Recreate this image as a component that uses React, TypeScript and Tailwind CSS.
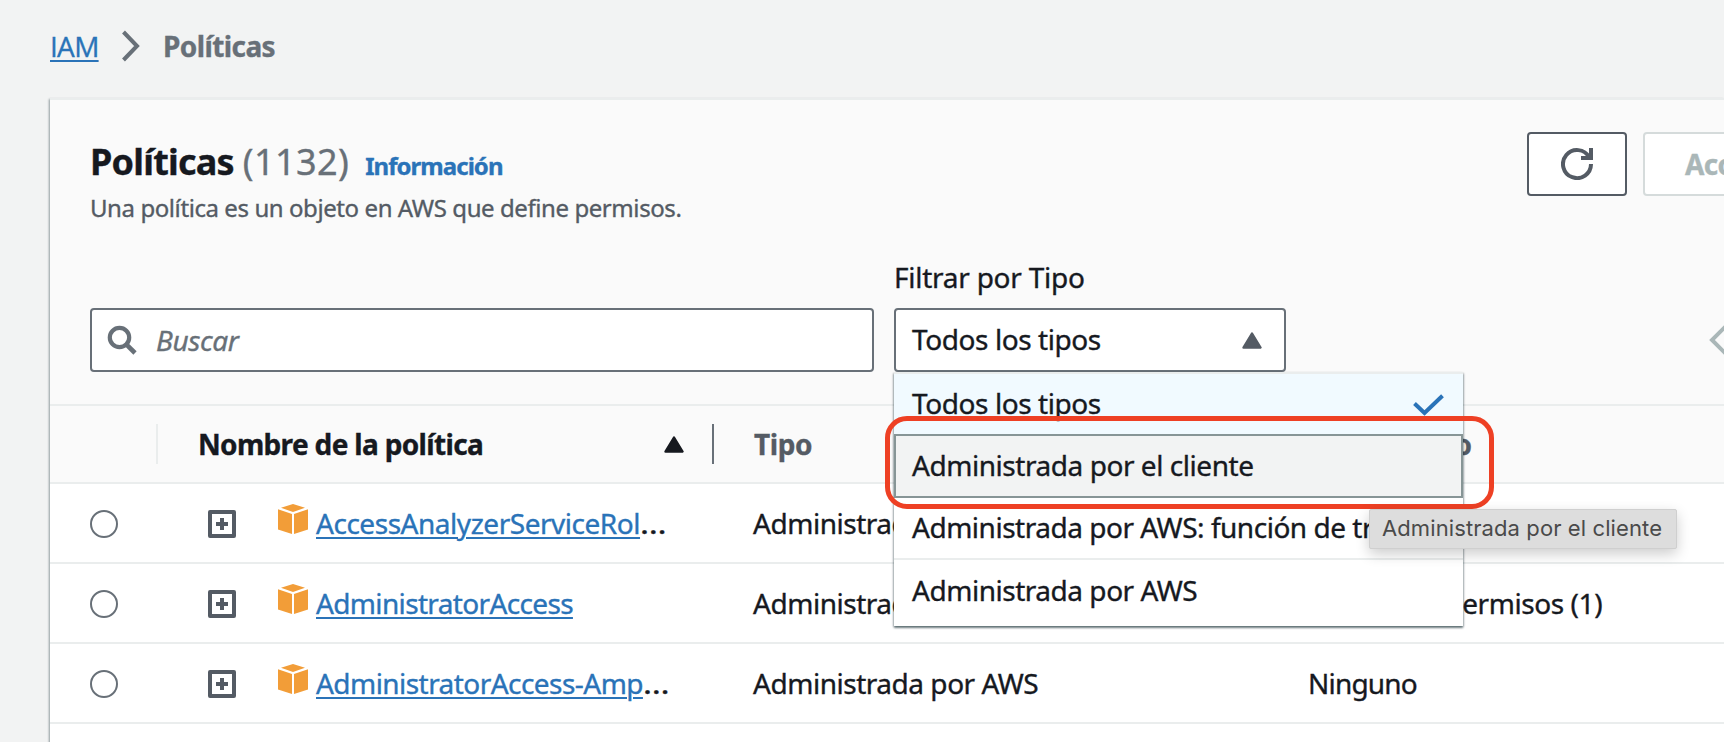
import React from 'react';

function SortUp({ className }: { className: string }) {
  return (
    <svg width="20" height="17" viewBox="0 0 20 17" className={className}>
      <path d="M10 1.5 18.5 15.5H1.5Z" fill="currentColor" stroke="currentColor" strokeWidth="2.4" strokeLinejoin="round" />
    </svg>
  );
}

function Cube() {
  return (
    <svg width="30" height="30" viewBox="0 0 30 30" className="mb-2 shrink-0 fill-[#f29d38]">
      <path d="M15 0 27 3.8 15 8 3 3.8Z" />
      <path d="M0 5.2 14 10V30L0 25.6Z" />
      <path d="M30 5.2 16 10V30L30 25.6Z" />
    </svg>
  );
}

function ExpandIcon() {
  return (
    <svg width="28" height="28" viewBox="0 0 28 28" fill="none" stroke="#545b64" strokeWidth="4" className="mt-0.5 ml-[90px] shrink-0">
      <rect x="2" y="2" width="24" height="24" strokeLinejoin="round" />
      <path d="M14 8v12M8 14h12" />
    </svg>
  );
}

type Row = { name: string; nameTrack: string; cut: boolean; use: string; useTrack: string };

const rows: Row[] = [
  { name: 'AccessAnalyzerServiceRol', nameTrack: 'tracking-[-0.47px]', cut: true, use: 'Ninguno', useTrack: 'tracking-[-0.8px]' },
  { name: 'AdministratorAccess', nameTrack: 'tracking-[-0.65px]', cut: false, use: 'Política de permisos (1)', useTrack: 'tracking-[-0.42px]' },
  { name: 'AdministratorAccess-Amp', nameTrack: 'tracking-[-0.55px]', cut: true, use: 'Ninguno', useTrack: 'tracking-[-0.8px]' },
];

function PolicyRow({ row }: { row: Row }) {
  return (
    <div className="flex h-20 items-center border-b-2 border-[#eaeded] bg-white pl-10">
      <span className="mt-0.5 size-7 shrink-0 rounded-full border-2 border-[#687078] bg-white" />
      <ExpandIcon />
      <div className="ml-[42px] flex w-[475px] shrink-0 items-center">
        <Cube />
        <span className={'ml-2 ' + row.nameTrack}>
          <a className="text-[#2a73b8] underline decoration-2 underline-offset-[3px]">{row.name}</a>
          {row.cut && <span className="inline-block origin-left scale-x-[1.2]">…</span>}
        </span>
      </div>
      <span className="w-[555px] shrink-0 tracking-[-0.47px]">Administrada por AWS</span>
      <span className={'shrink-0 ' + row.useTrack}>{row.use}</span>
    </div>
  );
}

function TypeMenu() {
  return (
    <div className="absolute top-16 left-0 z-10 h-[254px] w-[569px] border-t-2 border-[#eaeded] bg-white shadow-[0_2px_2px_0_rgba(0,28,36,0.45),1px_1px_2px_0_rgba(0,28,36,0.22),-1px_1px_2px_0_rgba(0,28,36,0.22)]">
      <div className="flex h-[60px] items-center justify-between bg-[#f1faff] pr-[19px] pl-[18px]">
        <span className="mb-0.5 tracking-[-0.42px]">Todos los tipos</span>
        <svg width="31" height="23" viewBox="0 0 31 23" fill="none" stroke="#2a73b8" strokeWidth="4" className="mt-0.5">
          <path d="M1.5 9.5 11.5 19 29.5 1.7" />
        </svg>
      </div>
      <div className="flex h-16 items-center border-2 border-[#879596] bg-[#f2f3f3] pb-0.5 pl-4">
        <span className="tracking-[-0.45px]">Administrada por el cliente</span>
      </div>
      <div className="flex h-[62px] items-center overflow-hidden border-b-2 border-[#eaeded] pb-0.5 pl-[18px] whitespace-nowrap">
        <span className="tracking-[-0.48px]">Administrada por AWS: función de trabajo</span>
      </div>
      <div className="flex h-[62px] items-center pb-[3px] pl-[18px]">
        <span className="tracking-[-0.47px]">Administrada por AWS</span>
      </div>
      <div className="absolute top-[42px] left-[-9px] h-[93px] w-[609px] rounded-[22px] border-[5px] border-[#ee4024]" />
      <div className="absolute top-[135px] left-[475px] flex h-10 w-[308px] items-center rounded-[2px] border border-[#cfcfcf] bg-[#dddddd] pb-0.5 pl-3 font-['Inter',sans-serif] text-[22px] tracking-[0.1px] whitespace-nowrap text-[#4a4a4a] shadow-[0_5px_14px_rgba(0,0,0,0.2)] [-webkit-text-stroke:0px]">
        Administrada por el cliente
      </div>
    </div>
  );
}

export default function App() {
  return (
    <div className="h-[742px] w-[1724px] overflow-hidden bg-[#f2f3f3] font-['Noto_Sans',sans-serif] text-[28px] leading-9 whitespace-nowrap text-[#16191f] [-webkit-text-stroke:0.35px]">
      <nav className="flex h-[98px] items-start pt-7 pl-[50px]">
        <a className="w-[50px] font-['Open_Sans',sans-serif] tracking-[-0.7px] text-[#2a73b8] underline decoration-2 underline-offset-[3px]">IAM</a>
        <svg width="20" height="32" viewBox="0 0 20 32" fill="none" stroke="#687078" strokeWidth="4" className="mt-0.5 ml-[21px]">
          <path d="M2.5 2 16 16 2.5 30" />
        </svg>
        <span className="ml-[22px] font-bold tracking-[-0.6px] text-[#687078]">Políticas</span>
      </nav>

      <main className="ml-[50px] h-[660px] border-t-2 border-[#eaeded] bg-[#fafafa] shadow-[-1px_1px_2px_0_rgba(0,28,36,0.4)]">
        <header className="flex h-[136px] items-start justify-between pt-8 pl-10">
          <div>
            <div className="flex items-baseline pt-[3px] leading-[54px]">
              <h1 className="text-[36px] font-bold tracking-[-0.8px]">Políticas</h1>
              <span className="ml-[9px] text-[36px] tracking-[0.4px] text-[#687078]">(1132)</span>
              <a className="ml-4 text-[24px] font-bold tracking-[-0.95px] text-[#2a73b8]">Información</a>
            </div>
            <p className="-mt-[3px] text-[24px] leading-9 tracking-[-0.42px] text-[#545b64]">Una política es un objeto en AWS que define permisos.</p>
          </div>
          <div className="flex w-[197px] shrink-0 gap-4 overflow-hidden">
            <button className="flex h-16 w-[100px] shrink-0 items-center justify-center rounded-[4px] border-2 border-[#545b64] bg-white">
              <svg width="32" height="32" viewBox="0 0 32 32" fill="none" stroke="#545b64" strokeWidth="4">
                <path d="M30 16A14 14 0 1 1 28.2 9.2" />
                <path d="M30 0v10H20" />
              </svg>
            </button>
            <button className="flex h-16 w-[180px] shrink-0 items-center rounded-[4px] border-2 border-[#d5dbdb] bg-white pl-10 font-bold tracking-[-0.6px] text-[#aab7b8]">
              Acciones
            </button>
          </div>
        </header>

        <div className="flex h-[168px] items-end pb-8 pl-10">
          <div className="flex h-16 w-[784px] items-center rounded-[4px] border-2 border-[#687078] bg-white pl-[15px]">
            <svg width="30" height="31" viewBox="0 0 30 31" fill="none" stroke="#687078" strokeWidth="4.2">
              <circle cx="12.5" cy="12.5" r="9.7" />
              <path d="M19.3 19.3 28 28" strokeWidth="4.6" />
            </svg>
            <span className="ml-[19px] tracking-[-0.4px] text-[#687078] italic">Buscar</span>
          </div>
          <div className="ml-5 w-[392px]">
            <div className="mb-[13px] tracking-[-0.25px]">Filtrar por Tipo</div>
            <div className="relative">
              <div className="flex h-16 items-center justify-between rounded-[4px] border-2 border-[#687078] bg-white pr-[22px] pl-4">
                <span className="mb-0.5 tracking-[-0.42px]">Todos los tipos</span>
                <SortUp className="text-[#545b64]" />
              </div>
              <TypeMenu />
            </div>
          </div>
          <svg width="15" height="34" viewBox="0 0 15 34" fill="none" stroke="#aab7b8" strokeWidth="4" className="mb-[15px] ml-[423px]">
            <path d="M20 0 3 17 20 34" />
          </svg>
        </div>

        <div className="flex h-20 items-center border-y-2 border-[#eaeded] font-bold">
          <span className="ml-[106px] h-10 w-0.5 bg-[#eaeded]" />
          <span className="mb-px ml-10 w-[466px] tracking-[-0.66px]">Nombre de la política</span>
          <SortUp className="text-[#16191f]" />
          <span className="ml-7 h-10 w-0.5 bg-[#687078]" />
          <span className="mb-px ml-10 w-[553px] tracking-[-0.4px] text-[#545b64]">Tipo</span>
          <span className="mb-px tracking-[-0.75px] text-[#545b64]">Se usa como</span>
        </div>

        {rows.map((row) => (
          <PolicyRow key={row.name} row={row} />
        ))}
        <div className="h-20 bg-white" />
      </main>
    </div>
  );
}
